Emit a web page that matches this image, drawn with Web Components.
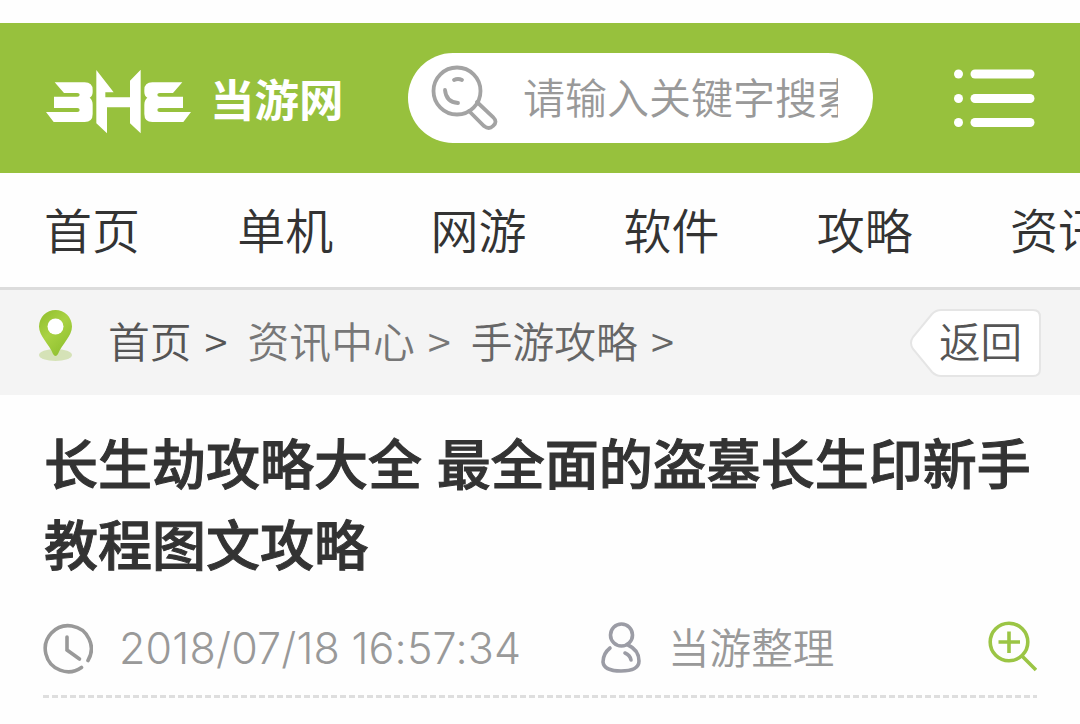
<!DOCTYPE html>
<html lang="zh-CN">
<head>
<meta charset="utf-8">
<title>当游网</title>
<style>
  body {
    margin: 0;
    width: 1080px;
    height: 724px;
    overflow: hidden;
    background: #fefefe;
    color: #333;
    font-family: "Noto Sans CJK SC", sans-serif;
    font-weight: 350;
  }
</style>
</head>
<body>
<game-header>
  <site-logo slot="logo">当游网</site-logo>
  <search-box>请输入关键字搜索</search-box>
</game-header>
<nav-bar>
  <a>首页</a><a>单机</a><a>网游</a><a>软件</a><a>攻略</a><a>资讯</a>
</nav-bar>
<bread-crumb>
  <span>首页</span><span class="sub">资讯中心</span><span class="mid">手游攻略</span>
  <back-button slot="back">返回</back-button>
</bread-crumb>
<article-head>
  长生劫攻略大全 最全面的盗墓长生印新手教程图文攻略
  <span slot="time">2018/07/18 16:57:34</span>
  <span slot="author">当游整理</span>
</article-head>

<script>
function define(name, html) {
  const template = document.createElement("template");
  template.innerHTML = html;
  customElements.define(name, class extends HTMLElement {
    constructor() {
      super();
      this.attachShadow({ mode: "open" });
      this.shadowRoot.appendChild(template.content.cloneNode(true));
    }
  });
}

define("game-header", /*html*/ `
  <style>
    :host {
      display: flex;
      align-items: center;
      box-sizing: border-box;
      height: 150px;
      margin-top: 23px;
      padding: 0 45px 0 42px;
      background: #97c13d;
    }
    .logo { width: 366px; }
    .menu { display: block; margin-left: auto; }
  </style>
  <div class="logo"><slot name="logo"></slot></div>
  <slot></slot>
  <svg class="menu" width="82" height="60" fill="#fff">
    <circle cx="5.500" cy="6" r="4.500"/><rect x="17.500" y="1.500" width="64" height="9" rx="4.500"/>
    <circle cx="5.500" cy="30.500" r="4.500"/><rect x="17.500" y="26" width="64" height="9" rx="4.500"/>
    <circle cx="5.500" cy="54.500" r="4.500"/><rect x="17.500" y="50" width="64" height="9" rx="4.500"/>
  </svg>
`);

define("site-logo", /*html*/ `
  <style>
    :host {
      display: flex;
      align-items: center;
      gap: 16px;
      color: #fff;
      font-size: 44.5px;
      font-weight: 700;
      line-height: 60px;
    }
    svg { display: block; margin-top: 6px; }
  </style>
  <svg width="152" height="74" viewBox="0 0 456 222" fill="#fff">
    <path d="M38 55H128Q152 55 152 78V84Q152 96 143 101Q152 108 152 122V150Q152 174 128 174H35L12 144H106Q113 144 113 138Q113 132 106 132H36V98H106Q113 98 113 92Q113 87 106 87H66Z"/>
    <path d="M163 18L215 85H190V100H264V50L296 17V208L264 178V130H195V208L163 178Z"/>
    <path transform="matrix(-1 0 0 1 459 0)" d="M38 55H128Q152 55 152 78V84Q152 96 143 101Q152 108 152 122V150Q152 174 128 174H35L12 144H106Q113 144 113 138Q113 132 106 132H36V98H106Q113 98 113 92Q113 87 106 87H66Z"/>
  </svg>
  <slot></slot>
`);

define("search-box", /*html*/ `
  <style>
    :host {
      display: flex;
      align-items: center;
      box-sizing: border-box;
      width: 465px;
      height: 90px;
      padding: 0 35px 0 23px;
      border-radius: 45px;
      background: #fff;
      color: #999;
      font-size: 42px;
      line-height: 60px;
    }
    svg { flex: none; margin-right: 24px; }
    div { flex: 1; margin-top: -4px; overflow: hidden; white-space: nowrap; }
  </style>
  <svg width="68" height="68" fill="none" stroke="#a3a3a3" stroke-width="3.8" stroke-linecap="round">
    <circle cx="26" cy="27" r="23.5"/>
    <path d="M23 16Q27 14 31 16M14 26Q15 38 27 39"/>
    <path d="M38 47L53 62Q58 66 62 62Q67 58 62 53L46 38"/>
  </svg>
  <div><slot></slot></div>
`);

define("nav-bar", /*html*/ `
  <style>
    :host {
      display: flex;
      gap: 97.2px;
      box-sizing: border-box;
      height: 117px;
      padding: 20px 0 0 44px;
      overflow: hidden;
      border-bottom: 3px solid #dcdcdc;
      font-size: 48px;
      line-height: 70px;
      white-space: nowrap;
    }
    ::slotted(a) { flex: none; }
  </style>
  <slot></slot>
`);

define("bread-crumb", /*html*/ `
  <style>
    :host {
      display: flex;
      align-items: center;
      box-sizing: border-box;
      height: 105px;
      padding: 0 38px 0 38px;
      background: #f4f4f4;
      color: #555;
      font-size: 41.8px;
      line-height: 60px;
    }
    .pin { margin: -13px 34px 0 0; }
    ::slotted(span) { margin-top: -6px; }
    ::slotted(span)::after {
      content: ">";
      margin: 0 20px 0 13px;
    }
    ::slotted(.sub) { color: #777; }
    ::slotted(.mid) { color: #666; }
    .back { margin-left: auto; }
  </style>
  <svg class="pin" width="36" height="54">
    <defs>
      <linearGradient id="g" x2=".7" y2="1">
        <stop offset="0" stop-color="#8fbd2c"/>
        <stop offset=".5" stop-color="#a9d243"/>
        <stop offset="1" stop-color="#8fc02f"/>
      </linearGradient>
    </defs>
    <ellipse cx="17.500" cy="46" rx="16.500" ry="6" fill="#d5e2b7"/>
    <path d="M17.500 1A16.500 16.500 0 0 1 34 17.500C34 27 24 35 20 45Q17.500 49 15 45C11 35 1 27 1 17.500A16.500 16.500 0 0 1 17.500 1Z" fill="url(#g)"/>
    <circle cx="17.500" cy="17.500" r="8" fill="#fff"/>
  </svg>
  <slot></slot>
  <div class="back"><slot name="back"></slot></div>
`);

define("back-button", /*html*/ `
  <style>
    :host {
      display: grid;
      align-items: center;
      width: 133px;
      height: 70px;
      color: #555;
      font-size: 41.6px;
      line-height: 60px;
    }
    svg, span { grid-area: 1 / 1; }
    span { margin-top: -5px; padding-left: 30px; }
  </style>
  <svg width="133" height="70">
    <path d="M32 2H124Q131 2 131 9V61Q131 68 124 68H32Q27 68 23 64L4 41Q0 35 4 29L23 6Q27 2 32 2Z" fill="#fff" stroke="#e5e5e5" stroke-width="2"/>
  </svg>
  <span><slot></slot></span>
`);

define("article-head", /*html*/ `
  <style>
    :host { display: block; padding: 26px 43px 0; }
    h1 {
      margin: 0 -10px 0 1px;
      font-size: 54px;
      font-weight: 500;
      line-height: 81px;
      word-spacing: 2.500px;
      -webkit-text-stroke: 1px #333;
    }
    .meta {
      display: flex;
      align-items: center;
      height: 60px;
      margin-top: 35px;
      color: #999;
      font-size: 41.6px;
      line-height: 60px;
    }
    .meta svg { flex: none; }
    .time {
      width: 482px;
      margin-left: 26px;
      font-family: Inter, sans-serif;
      font-size: 43px;
      font-weight: 300;
      letter-spacing: .2px;
      word-spacing: -1px;
      white-space: nowrap;
    }
    .author { margin: -5px 0 0 26px; }
    .zoom { margin: -5px 0 0 auto; }
    .line {
      height: 3px;
      margin-top: 17px;
      background: repeating-linear-gradient(90deg, #dedede 0 6px, transparent 6px 9px);
    }
  </style>
  <h1><slot></slot></h1>
  <div class="meta">
    <svg class="clock" width="50" height="52" fill="none" stroke="#999" stroke-width="3.600" stroke-linecap="round">
      <path d="M38.500 45.500A23 23 0 1 1 45 38.500"/>
      <path d="M24 15V28L36.500 37"/>
    </svg>
    <div class="time"><slot name="time"></slot></div>
    <svg width="41" height="52" fill="none" stroke="#9b9ca5" stroke-width="3.600" stroke-linecap="round">
      <circle cx="20.500" cy="13" r="11"/>
      <path d="M9 26C4 30 2 35 2 40Q3 49 20 49Q38 49 38 39Q38 28 27 23M24 31Q29 33 30 38"/>
    </svg>
    <div class="author"><slot name="author"></slot></div>
    <svg class="zoom" width="49" height="52" fill="none" stroke="#9bc545" stroke-width="3.600">
      <circle cx="21" cy="22" r="18.800"/>
      <path d="M10.500 22H32M21 11.500V33M34 36L48 50"/>
    </svg>
  </div>
  <div class="line"></div>
`);
</script>
</body>
</html>
